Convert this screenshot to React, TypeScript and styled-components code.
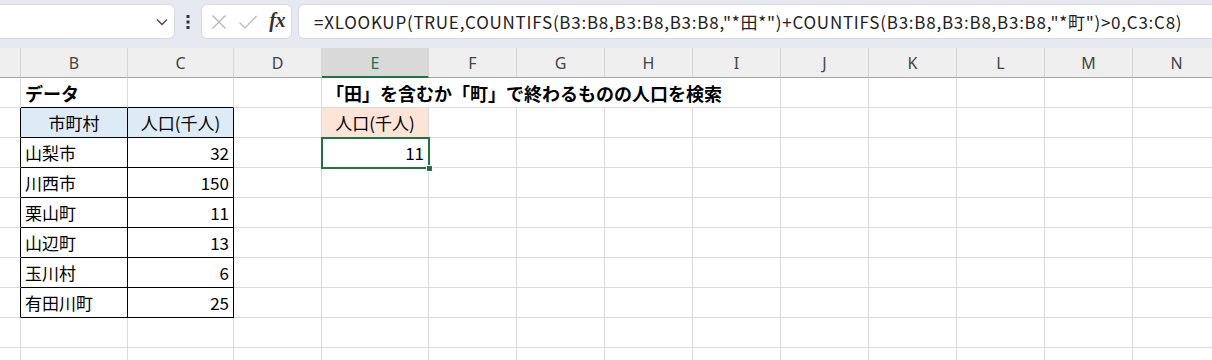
import React from "react";
import styled, { createGlobalStyle } from "styled-components";

const GlobalStyle = createGlobalStyle`
  body {
    margin: 0;
    background: #ffffff;
    font-family: "Noto Sans CJK JP", "Noto Sans", sans-serif;
  }
`;

const GRID = "#dadada";
const BLACK = "#000000";
const GREEN = "#217346";

const Window = styled.div`
  width: 1212px;
  height: 360px;
  overflow: hidden;
  background: #ffffff;
`;

const TopBar = styled.div`
  display: flex;
  align-items: flex-start;
  height: 48px;
  padding-top: 4px;
  box-sizing: border-box;
  background: #e6e9ef;
`;

const Box = styled.div`
  height: 35px;
  box-sizing: border-box;
  background: #ffffff;
  border: 1px solid #d6d9df;
  border-radius: 6px;
  display: flex;
  align-items: center;
`;

const NameBox = styled(Box)`
  width: 175px;
  border-left: none;
  border-radius: 0 6px 6px 0;
  justify-content: flex-end;
  padding-right: 6px;
`;

const Dots = styled.div`
  width: 26px;
  height: 35px;
  display: flex;
  align-items: center;
  justify-content: center;
`;

const FxBox = styled(Box)`
  width: 91px;
  padding: 0 6px 0 9px;
  justify-content: space-between;
`;

const FxLabel = styled.span`
  font-family: "Liberation Serif", "DejaVu Serif", serif;
  font-style: italic;
  font-weight: 700;
  font-size: 20px;
  color: #333333;
  letter-spacing: -0.5px;
  margin-top: -3px;
`;

const FormulaBox = styled(Box)`
  flex: 1;
  margin-left: 6px;
  margin-right: -20px;
  padding-left: 15px;
  font-size: 17px;
  letter-spacing: 0.75px;
  color: #222222;
  white-space: nowrap;
`;

const Sheet = styled.div<{ $cols: string }>`
  display: grid;
  grid-template-columns: ${(p) => p.$cols};
  grid-auto-rows: 30px;
`;

const HeaderCell = styled.div<{ $active?: boolean }>`
  height: 30px;
  box-sizing: border-box;
  background: ${(p) => (p.$active ? "#d9d9d9" : "#efefef")};
  border-right: 1px solid #d4d4d4;
  border-bottom: ${(p) => (p.$active ? `2px solid ${GREEN}` : "1px solid #a6a6a6")};
  color: ${(p) => (p.$active ? GREEN : "#444444")};
  font-family: "Noto Sans", "Liberation Sans", sans-serif;
  font-size: 16px;
  display: flex;
  align-items: center;
  justify-content: center;
  padding-top: ${(p) => (p.$active ? "1px" : "0")};
`;

const Cell = styled.div<{
  $align?: "left" | "right" | "center";
  $bold?: boolean;
  $bg?: string;
  $right?: string;
  $bottom?: string;
  $span?: number;
  $selected?: boolean;
}>`
  position: relative;
  box-sizing: border-box;
  height: 30px;
  padding: 0 4px 0 4px;
  background: ${(p) => p.$bg || "transparent"};
  border-right: 1px solid ${(p) => p.$right || GRID};
  border-bottom: 1px solid ${(p) => p.$bottom || GRID};
  grid-column: span ${(p) => p.$span || 1};
  display: flex;
  align-items: center;
  justify-content: ${(p) =>
    p.$align === "right" ? "flex-end" : p.$align === "center" ? "center" : "flex-start"};
  font-size: ${(p) => (p.$bold ? "18px" : "17px")};
  font-weight: ${(p) => (p.$bold ? 700 : 400)};
  color: #000000;
  white-space: nowrap;
  z-index: ${(p) => (p.$selected ? 2 : "auto")};

  ${(p) =>
    p.$selected &&
    `
    &::after {
      content: "";
      position: absolute;
      top: -1px;
      left: -1px;
      right: -2px;
      bottom: -2px;
      border: 2px solid ${GREEN};
    }
    &::before {
      content: "";
      position: absolute;
      right: -4px;
      bottom: -4px;
      width: 5px;
      height: 5px;
      background: ${GREEN};
      outline: 1px solid #ffffff;
      z-index: 3;
    }
  `}
`;

const columns = [
  { key: "A", width: 21, label: "" },
  { key: "B", width: 107, label: "B" },
  { key: "C", width: 106, label: "C" },
  { key: "D", width: 88, label: "D" },
  { key: "E", width: 107, label: "E" },
  ...["F", "G", "H", "I", "J", "K", "L", "M", "N"].map((k) => ({ key: k, width: 88, label: k })),
];

const towns = [
  { name: "山梨市", pop: 32 },
  { name: "川西市", pop: 150 },
  { name: "栗山町", pop: 11 },
  { name: "山辺町", pop: 13 },
  { name: "玉川村", pop: 6 },
  { name: "有田川町", pop: 25 },
];

type CellDef = {
  text?: string;
  align?: "left" | "right" | "center";
  bold?: boolean;
  bg?: string;
  right?: string;
  bottom?: string;
  span?: number;
  selected?: boolean;
};

const buildRow = (r: number): CellDef[] => {
  const cells: CellDef[] = [];
  for (let c = 0; c < columns.length; c++) {
    const key = columns[c].key;
    const def: CellDef = {};
    if (r === 1) {
      if (key === "B") Object.assign(def, { text: "データ", bold: true, bottom: BLACK });
      if (key === "C") def.bottom = BLACK;
      if (key === "E") {
        // title overflows across E:I, so those gridlines are hidden
        Object.assign(def, { text: "「田」を含むか「町」で終わるものの人口を検索", bold: true, span: 5 });
        cells.push(def);
        c += 4;
        continue;
      }
    }
    if (r >= 2 && r <= 8) {
      if (key === "A") def.right = BLACK;
      if (key === "B" || key === "C") {
        def.right = BLACK;
        def.bottom = BLACK;
        if (r === 2) {
          def.bg = "#ddebf7";
          def.align = "center";
          def.text = key === "B" ? "市町村" : "人口(千人)";
        } else {
          const t = towns[r - 3];
          def.text = key === "B" ? t.name : String(t.pop);
          def.align = key === "B" ? "left" : "right";
        }
      }
    }
    if (key === "E" && r === 2) Object.assign(def, { text: "人口(千人)", align: "center", bg: "#fce4d6" });
    if (key === "E" && r === 3) Object.assign(def, { text: "11", align: "right", selected: true });
    cells.push(def);
  }
  return cells;
};

const Chevron = () => (
  <svg width="12" height="8" viewBox="0 0 12 8">
    <path d="M1 1.5 L6 6.5 L11 1.5" fill="none" stroke="#444" strokeWidth="1.3" />
  </svg>
);

const VerticalDots = () => (
  <svg width="4" height="16" viewBox="0 0 4 16">
    <rect x="0.5" y="1" width="3" height="3" fill="#333" />
    <rect x="0.5" y="6.5" width="3" height="3" fill="#333" />
    <rect x="0.5" y="12" width="3" height="3" fill="#333" />
  </svg>
);

const CrossIcon = () => (
  <svg width="16" height="16" viewBox="0 0 16 16">
    <path d="M1.5 1.5 L14.5 14.5 M14.5 1.5 L1.5 14.5" stroke="#b5b5b5" strokeWidth="1.2" />
  </svg>
);

const CheckIcon = () => (
  <svg width="20" height="16" viewBox="0 0 20 16">
    <path d="M1.5 8.5 L7 14 L18.5 2" fill="none" stroke="#b5b5b5" strokeWidth="1.2" />
  </svg>
);

const App = () => {
  const cols = columns.map((c) => `${c.width}px`).join(" ");
  const rows = Array.from({ length: 10 }, (_, i) => buildRow(i + 1));

  return (
    <Window>
      <GlobalStyle />
      <TopBar>
        <NameBox>
          <Chevron />
        </NameBox>
        <Dots>
          <VerticalDots />
        </Dots>
        <FxBox>
          <CrossIcon />
          <CheckIcon />
          <FxLabel>fx</FxLabel>
        </FxBox>
        <FormulaBox>
          =XLOOKUP(TRUE,COUNTIFS(B3:B8,B3:B8,B3:B8,"*田*")+COUNTIFS(B3:B8,B3:B8,B3:B8,"*町")&gt;0,C3:C8)
        </FormulaBox>
      </TopBar>
      <Sheet $cols={cols}>
        {columns.map((c) => (
          <HeaderCell key={c.key} $active={c.key === "E"}>
            {c.label}
          </HeaderCell>
        ))}
        {rows.map((row, ri) =>
          row.map((cell, ci) => (
            <Cell
              key={`${ri}-${ci}`}
              $align={cell.align}
              $bold={cell.bold}
              $bg={cell.bg}
              $right={cell.right}
              $bottom={cell.bottom}
              $span={cell.span}
              $selected={cell.selected}
            >
              {cell.text}
            </Cell>
          ))
        )}
      </Sheet>
    </Window>
  );
};

export default App;
